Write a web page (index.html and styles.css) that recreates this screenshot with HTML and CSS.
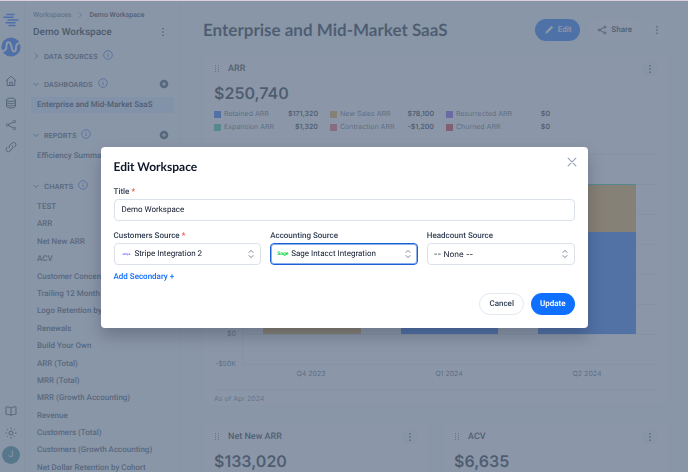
FILE: index.html
```html
<!DOCTYPE html>
<html lang="en">
<head>
    <meta charset="UTF-8">
    <meta name="viewport" content="width=device-width, initial-scale=1.0">
    <title>Edit Workspace</title>
    <link rel="stylesheet" href="styles.css">
</head>
<body>
    <!-- Shared icons -->
    <svg class="sprite" aria-hidden="true">
        <symbol id="dots" viewBox="0 0 10 10"><g fill="currentColor"><circle cx="5" cy="1.8" r=".8"/><circle cx="5" cy="5" r=".8"/><circle cx="5" cy="8.2" r=".8"/></g></symbol>
        <symbol id="info" viewBox="0 0 10 10"><circle cx="5" cy="5" r="4.3" fill="none" stroke="#1d4ed8" stroke-width=".8"/><path d="M5 4.6v2.4M5 2.9v.8" stroke="#1d4ed8" stroke-width=".9"/></symbol>
        <symbol id="plus" viewBox="0 0 10 10"><circle cx="5" cy="5" r="4.3" fill="#334155"/><path d="M5 3v4M3 5h4" stroke="#fff" stroke-width="1"/></symbol>
        <symbol id="down" viewBox="0 0 10 10"><path d="M2.500 4l2.500 2.500 2.500-2.500" fill="none" stroke="currentColor" stroke-width=".8"/></symbol>
        <symbol id="right" viewBox="0 0 10 10"><path d="M4 2.500l2.500 2.500-2.500 2.500" fill="none" stroke="currentColor" stroke-width=".8"/></symbol>
        <symbol id="grip" viewBox="0 0 6 8"><g fill="currentColor"><path d="M1 0h1v1H1zM4 0h1v1H4zM1 2h1v1H1zM4 2h1v1H4zM1 4h1v1H1zM4 4h1v1H4zM1 6h1v1H1zM4 6h1v1H4z"/></g></symbol>
        <symbol id="share" viewBox="0 0 24 24"><g fill="none" stroke="currentColor" stroke-width="2"><circle cx="5" cy="12" r="2.4"/><circle cx="19" cy="5" r="2.4"/><circle cx="19" cy="19" r="2.4"/><path d="M7.2 11l9.6-5M7.2 13l9.6 5"/></g></symbol>
        <symbol id="updown" viewBox="0 0 6 10"><path d="M1 3.4L3 1.4l2 2M1 6.6l2 2 2-2" fill="none" stroke="#64748b" stroke-width=".9" stroke-linecap="round" stroke-linejoin="round"/></symbol>
    </svg>

    <div class="app">
        <!-- Icon rail -->
        <nav class="rail" aria-label="Main">
            <a href="#" class="brand" aria-label="Home">
                <svg width="16" height="14" viewBox="0 0 16 14"><path d="M4 1.500h7M1 4.200h9M5 7h10M3 9.800h9M6 12.500h6" stroke="#0f62fe" stroke-width="1.500" stroke-linecap="round"/></svg>
            </a>
            <a href="#" class="org" aria-label="Organization">
                <svg width="20" height="20" viewBox="0 0 20 20"><circle cx="10" cy="10" r="9.600" fill="#0f62fe"/><path d="M1 14C4.500 14 5.500 12 5.500 9C5.500 4 9 4.500 10 8L11 12C12 15.500 15 15.500 15 11C15 8 15.500 6 19 6" fill="none" stroke="#fff" stroke-width="2"/></svg>
            </a>
            <a href="#" aria-label="Overview"><svg viewBox="0 0 24 24"><path d="M2 11.500L12 2.500l10 9M4.500 9.500V21h15V9.500M9.500 21v-6.500h5V21"/></svg></a>
            <a href="#" aria-label="Data"><svg viewBox="0 0 24 24"><ellipse cx="12" cy="5.500" rx="9" ry="3.500"/><path d="M3 5.500v13c0 2 4 3.500 9 3.500s9-1.500 9-3.500v-13M3 10c0 2 4 3.500 9 3.500s9-1.500 9-3.500M3 14.500c0 2 4 3.500 9 3.500s9-1.500 9-3.500"/></svg></a>
            <a href="#" aria-label="Share"><svg viewBox="0 0 24 24"><use href="#share"/></svg></a>
            <a href="#" aria-label="Links"><svg viewBox="0 0 24 24"><path d="M13.500 8.500a4.500 4.500 0 0 1 1 7l-4.500 4.500a4.500 4.500 0 0 1-6.400-6.400l2-2M10.500 15.500a4.500 4.500 0 0 1-1-7L14 4a4.500 4.500 0 0 1 6.400 6.400l-2 2"/></svg></a>
            <a href="#" class="rail-bottom" aria-label="Docs"><svg viewBox="0 0 24 24"><path d="M12 6c-2-2-6-2.500-10-2v15c4-.5 8 0 10 2 2-2 6-2.500 10-2V4c-4-.5-8 0-10 2zM12 6v15"/></svg></a>
            <a href="#" aria-label="Theme"><svg viewBox="0 0 24 24"><circle cx="12" cy="12" r="4"/><path d="M12 1v3M12 20v3M1 12h3M20 12h3M4.200 4.200l2 2M17.800 17.800l2 2M4.200 19.800l2-2M17.800 6.200l2-2"/></svg></a>
            <a href="#" class="avatar">J</a>
        </nav>

        <!-- Workspace sidebar -->
        <aside class="sidebar">
            <div class="breadcrumb"><a href="#">Workspaces</a><svg><use href="#right"/></svg><span>Demo Workspace</span></div>
            <div class="workspace"><span>Demo Workspace</span><button aria-label="Workspace menu"><svg><use href="#dots"/></svg></button></div>
            <h2 class="first"><svg><use href="#right"/></svg>Data Sources<svg class="info"><use href="#info"/></svg></h2>
            <h2><svg><use href="#down"/></svg>Dashboards<svg class="info"><use href="#info"/></svg><button aria-label="Add dashboard"><svg><use href="#plus"/></svg></button></h2>
            <ul>
                <li class="active"><a href="#">Enterprise and Mid-Market SaaS</a></li>
            </ul>
            <h2><svg><use href="#down"/></svg>Reports<svg class="info"><use href="#info"/></svg><button aria-label="Add report"><svg><use href="#plus"/></svg></button></h2>
            <ul>
                <li><a href="#">Efficiency Summary</a></li>
            </ul>
            <h2><svg><use href="#down"/></svg>Charts<svg class="info"><use href="#info"/></svg></h2>
            <ul class="charts">
                <li><a href="#">TEST</a></li>
                <li><a href="#">ARR</a></li>
                <li><a href="#">Net New ARR</a></li>
                <li><a href="#">ACV</a></li>
                <li><a href="#">Customer Concentration</a></li>
                <li><a href="#">Trailing 12 Month</a></li>
                <li><a href="#">Logo Retention by Cohort</a></li>
                <li><a href="#">Renewals</a></li>
                <li><a href="#">Build Your Own</a></li>
                <li><a href="#">ARR (Total)</a></li>
                <li><a href="#">MRR (Total)</a></li>
                <li><a href="#">MRR (Growth Accounting)</a></li>
                <li><a href="#">Revenue</a></li>
                <li><a href="#">Customers (Total)</a></li>
                <li><a href="#">Customers (Growth Accounting)</a></li>
                <li><a href="#">Net Dollar Retention by Cohort</a></li>
            </ul>
        </aside>

        <!-- Dashboard -->
        <main>
            <header class="page-head">
                <h1>Enterprise and Mid-Market SaaS</h1>
                <button class="pill edit"><svg viewBox="0 0 12 12"><path d="M1.500 10.500l.8-2.800L9 1l2 2-6.700 6.700z" fill="#fff"/></svg>Edit</button>
                <button class="pill share"><svg viewBox="0 0 24 24"><use href="#share"/></svg>Share</button>
                <button class="round" aria-label="More"><svg><use href="#dots"/></svg></button>
            </header>

            <section class="card">
                <div class="card-head"><svg class="grip"><use href="#grip"/></svg><h3>ARR</h3><button class="round" aria-label="Chart menu"><svg><use href="#dots"/></svg></button></div>
                <div class="amount">$250,740</div>
                <div class="legend">
                    <div><i class="blue"></i>Retained ARR<b>$171,320</b></div>
                    <div><i class="gold"></i>New Sales ARR<b>$78,100</b></div>
                    <div><i class="purple"></i>Resurrected ARR<b>$0</b></div>
                    <div><i class="teal"></i>Expansion ARR<b>$1,320</b></div>
                    <div><i class="coral"></i>Contraction ARR<b>-$1,200</b></div>
                    <div><i class="red"></i>Churned ARR<b>$0</b></div>
                </div>
                <div class="chart">
                    <div class="axis"><span>$300K</span><span>$250K</span><span>$200K</span><span>$150K</span><span>$100K</span><span>$50K</span><span>$0</span><span>-$50K</span></div>
                    <div class="plot">
                        <div class="bar"><div class="gold" style="height: 60px"></div></div>
                        <div class="bar"><div class="gold" style="height: 50px"></div><div class="blue" style="height: 60px"></div></div>
                        <div class="bar"><div class="teal" style="height: 1px"></div><div class="gold" style="height: 47px"></div><div class="blue" style="height: 102px"></div></div>
                    </div>
                    <div class="periods"><span>Q4 2023</span><span>Q1 2024</span><span>Q2 2024</span></div>
                </div>
                <footer>As of Apr 2024</footer>
            </section>

            <div class="row">
                <section class="card">
                    <div class="card-head"><svg class="grip"><use href="#grip"/></svg><h3>Net New ARR</h3><button class="round" aria-label="Chart menu"><svg><use href="#dots"/></svg></button></div>
                    <div class="amount">$133,020</div>
                </section>
                <section class="card">
                    <div class="card-head"><svg class="grip"><use href="#grip"/></svg><h3>ACV</h3><button class="round" aria-label="Chart menu"><svg><use href="#dots"/></svg></button></div>
                    <div class="amount">$6,635</div>
                </section>
            </div>
        </main>
    </div>

    <!-- Edit workspace dialog -->
    <div class="backdrop">
        <form class="modal" role="dialog" aria-labelledby="modal-title">
            <div class="modal-head">
                <h2 id="modal-title">Edit Workspace</h2>
                <button type="button" class="close" aria-label="Close"><svg width="9" height="9" viewBox="0 0 9 9"><path d="M1 1l7 7M8 1L1 8" stroke="#94a3b8" stroke-width="1" stroke-linecap="round"/></svg></button>
            </div>
            <div class="field">
                <label for="title">Title <em>*</em></label>
                <input id="title" type="text" value="Demo Workspace">
            </div>
            <div class="sources">
                <div class="field">
                    <label for="customers">Customers Source <em>*</em></label>
                    <div class="select with-logo">
                        <span class="logo stripe">stripe</span>
                        <select id="customers"><option>Stripe Integration 2</option></select>
                        <svg><use href="#updown"/></svg>
                    </div>
                </div>
                <div class="field">
                    <label for="accounting">Accounting Source</label>
                    <div class="select with-logo focused">
                        <span class="logo sage">Sage</span>
                        <select id="accounting"><option>Sage Intacct Integration</option></select>
                        <svg><use href="#updown"/></svg>
                    </div>
                </div>
                <div class="field">
                    <label for="headcount">Headcount Source</label>
                    <div class="select">
                        <select id="headcount" class="empty"><option>-- None --</option></select>
                        <svg><use href="#updown"/></svg>
                    </div>
                </div>
            </div>
            <a href="#" class="add">Add Secondary +</a>
            <div class="actions">
                <button type="button" class="cancel">Cancel</button>
                <button type="submit" class="update">Update</button>
            </div>
        </form>
    </div>
</body>
</html>
```
FILE: styles.css
```css
* {
    margin: 0;
    padding: 0;
    box-sizing: border-box;
}

html, body {
    height: 100%;
    overflow: hidden;
}

body {
    font-family: 'Roboto', 'Inter', sans-serif;
    font-size: 8px;
    color: #0f172a;
    text-rendering: geometricPrecision;
}

button, input, select {
    font: inherit;
    color: inherit;
    text-rendering: inherit;
    border: 0;
    background: none;
}

button {
    display: flex;
    align-items: center;
    justify-content: center;
}

a {
    color: inherit;
    text-decoration: none;
}

ul {
    list-style: none;
}

svg {
    display: block;
    flex: none;
    width: 10px;
    height: 10px;
}

.sprite {
    position: absolute;
    width: 0;
    height: 0;
}

.app {
    display: flex;
    height: 100vh;
    overflow: hidden;
    background: #f8fafc;
}

/* Icon rail */
.rail {
    width: 25px;
    flex: none;
    display: flex;
    flex-direction: column;
    align-items: center;
    gap: 10px;
    padding: 13px 2px 8px 0;
    border-right: 1px solid #e8edf3;
    color: #334155;
}

.rail svg {
    width: 12px;
    height: 12px;
    fill: none;
    stroke: currentColor;
    stroke-width: 2;
}

.rail .brand svg {
    width: 16px;
    height: 14px;
}

.rail .org svg {
    width: 20px;
    height: 20px;
    stroke: none;
}

.rail .org {
    margin-bottom: 8px;
}

.rail-bottom {
    margin-top: auto;
}

.avatar {
    width: 18px;
    margin-top: -3px;
    line-height: 18px;
    border-radius: 50%;
    text-align: center;
    font-size: 9px;
    color: #f8fafc;
    background: #2f8091;
}

/* Sidebar */
.sidebar {
    width: 156px;
    flex: none;
    display: flex;
    flex-direction: column;
    padding: 8px 6px 0;
    border-right: 1px solid #e8edf3;
}

.breadcrumb {
    display: flex;
    align-items: center;
    gap: 4px;
    height: 13px;
    padding-left: 2px;
    font-size: 7px;
    font-weight: 500;
}

.breadcrumb a, .breadcrumb svg {
    color: #64748b;
}

.workspace {
    display: flex;
    align-items: center;
    justify-content: space-between;
    height: 16px;
    margin-top: 3px;
    padding: 0 6px 0 2px;
    font-size: 10px;
    font-weight: 600;
}

.sidebar h2 {
    display: flex;
    align-items: center;
    gap: 3px;
    height: 12px;
    margin-top: 16px;
    font-family: 'Inter', sans-serif;
    font-size: 7px;
    font-weight: 600;
    text-transform: uppercase;
    color: #334155;
}

.sidebar h2.first {
    margin-top: 10px;
}

.sidebar h2 button {
    margin-left: auto;
    padding-right: 5px;
}

.sidebar .info {
    margin: 0 0 3px 2px;
}

.sidebar ul {
    margin-top: 7px;
}

.sidebar li {
    height: 16px;
    line-height: 16px;
    padding-left: 6px;
    border-radius: 2px;
    font-weight: 500;
    color: #334155;
    white-space: nowrap;
}

.sidebar li.active {
    background: #dbeafe;
    color: #0f172a;
}

.charts {
    flex: 1;
    display: flex;
    flex-direction: column;
    justify-content: space-between;
    margin-bottom: -4px;
}

/* Dashboard */
main {
    flex: 1;
    min-width: 0;
    padding: 18px 19px 0 22px;
}

.page-head {
    display: flex;
    align-items: center;
    gap: 8px;
    height: 23px;
    margin-bottom: 14px;
    padding-right: 4px;
}

h1 {
    flex: 1;
    font-family: 'Lato', sans-serif;
    font-size: 17px;
    font-weight: 700;
    white-space: nowrap;
}

.pill {
    height: 22px;
    gap: 4px;
    padding: 0 9px;
    border-radius: 11px;
    font-weight: 500;
}

.pill.edit {
    background: #0f6bff;
    color: #fff;
}

.pill.share, .round {
    background: #fff;
}

.round {
    width: 16px;
    height: 16px;
    border-radius: 50%;
}

.card {
    background: #fff;
    border: 1px solid #f1f5f9;
    border-radius: 4px;
    padding: 0 10px;
}

.card-head {
    display: flex;
    align-items: center;
    gap: 8px;
    height: 26px;
}

.card-head .round {
    margin-left: auto;
    background: #f1f5f9;
}

.grip {
    width: 6px;
    height: 8px;
    color: #64748b;
}

h3 {
    font-size: 9px;
    font-weight: 500;
}

.amount {
    height: 22px;
    line-height: 22px;
    font-family: 'Inter', sans-serif;
    font-size: 16px;
    font-weight: 600;
}

.legend {
    display: grid;
    grid-template-columns: repeat(3, 104px);
    gap: 3px 12px;
    padding-top: 5px;
    font-family: 'Inter', sans-serif;
    font-size: 7px;
    line-height: 10px;
    color: #475569;
}

.legend div {
    display: flex;
    align-items: center;
}

.legend i {
    width: 7px;
    height: 7px;
    margin-right: 3px;
}

.legend b {
    margin-left: auto;
    font-weight: 600;
    color: #0f172a;
}

.blue { background: #1d6bf3; }
.gold { background: #e9a63a; }
.purple { background: #7c4df0; }
.teal { background: #2cc4a8; }
.coral { background: #ee5a5f; }
.red { background: #d92632; }

.chart {
    display: grid;
    grid-template-columns: 28px 1fr;
    margin-top: 22px;
    padding-right: 2px;
    font-size: 7px;
    color: #475569;
}

.axis {
    display: flex;
    flex-direction: column;
    justify-content: space-between;
    height: 220px;
    margin: -5px 0;
    padding-right: 6px;
    line-height: 10px;
    text-align: right;
}

/* One gridline every 30px, zero line one step above the bottom */
.plot {
    display: flex;
    align-items: flex-end;
    height: 211px;
    padding-bottom: 31px;
    border-left: 1px solid #e8edf3;
    background: repeating-linear-gradient(#e8edf3 0 1px, transparent 1px 30px);
}

.bar {
    flex: 1;
    padding: 0 20px;
}

.periods {
    grid-column: 2;
    display: flex;
    height: 24px;
    line-height: 18px;
    text-align: center;
}

.periods span {
    flex: 1;
}

.chart, .card footer {
    font-family: 'Inter', sans-serif;
}

.card footer {
    height: 16px;
    line-height: 18px;
    border-top: 1px solid #e8edf3;
    font-size: 7px;
    color: #64748b;
}

.row {
    display: grid;
    grid-template-columns: 1fr 1fr;
    gap: 14px;
    margin-top: 17px;
}

/* Dialog */
.backdrop {
    position: fixed;
    inset: 0;
    display: flex;
    align-items: center;
    justify-content: center;
    padding-top: 1px;
    border-top: 1px solid #dccfdc;
    background: rgba(100, 116, 139, 0.75);
}

.modal {
    width: 100%;
    max-width: 487px;
    padding: 13px;
    border-radius: 4px;
    background: #fff;
    box-shadow: 0 8px 16px rgba(15, 23, 42, 0.25);
}

.modal-head {
    display: flex;
    justify-content: space-between;
    height: 26px;
}

.modal-head h2 {
    font-family: 'Lato', sans-serif;
    font-size: 12px;
    line-height: 14px;
    font-weight: 700;
}

.close {
    width: 9px;
    height: 9px;
    margin: -2px -2px 0 0;
}

.field label {
    display: block;
    line-height: 11px;
    margin-bottom: 2px;
    font-weight: 500;
    color: #334155;
}

.field em {
    font-style: normal;
    color: #ef4444;
}

.field input, .field select {
    display: block;
    width: 100%;
    height: 22px;
    padding: 0 7px;
    border: 1px solid #dbe1e9;
    border-radius: 4px;
    background: #fff;
}

.field select {
    appearance: none;
    padding: 0 20px 0 6px;
}

.field select.empty {
    font-family: 'Inter', sans-serif;
}

.sources {
    display: grid;
    grid-template-columns: repeat(3, 1fr);
    gap: 9px;
    margin-top: 9px;
}

.select {
    position: relative;
}

.select svg {
    position: absolute;
    right: 7px;
    top: 6px;
    width: 6px;
    height: 10px;
    pointer-events: none;
}

.field .with-logo select {
    padding-left: 20px;
}

.focused select {
    border-color: #1d5fd6;
    box-shadow: inset 0 0 0 1px #8bb0ee;
}

/* Provider wordmark inside the select */
.logo {
    position: absolute;
    left: 7px;
    top: 0;
    line-height: 22px;
    font-weight: 700;
}

.stripe {
    left: 9px;
    font-size: 3px;
    color: #635bff;
}

.sage {
    font-size: 5px;
    color: #00d639;
}

.add {
    display: inline-block;
    margin-top: 5px;
    line-height: 13px;
    font-weight: 500;
    color: #0f6bff;
}

.actions {
    display: flex;
    justify-content: flex-end;
    gap: 7px;
    margin-top: 10px;
}

.actions button {
    height: 22px;
    padding: 0 9px;
    border-radius: 11px;
    font-weight: 600;
}

.actions .cancel {
    border: 1px solid #e2e8f0;
    font-weight: 500;
    color: #334155;
}

.update {
    background: #0f6fff;
    color: #fff;
}
```
